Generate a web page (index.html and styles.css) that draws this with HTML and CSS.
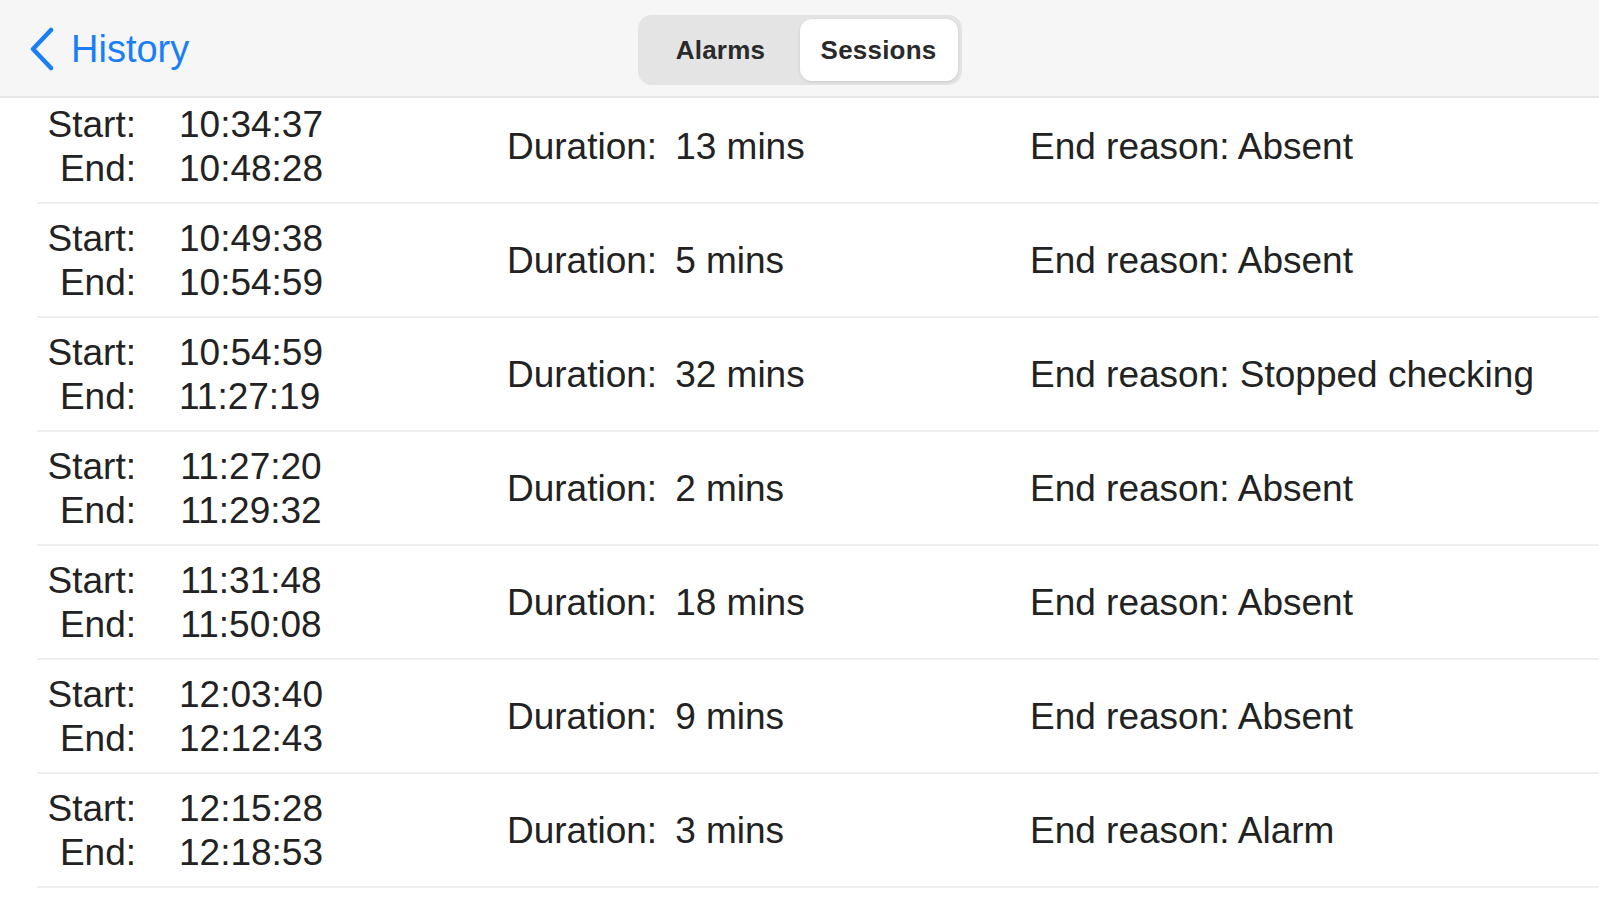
FILE: index.html
```html
<!DOCTYPE html>
<html>
<head>
<meta charset="utf-8">
<link rel="stylesheet" href="styles.css">
</head>
<body>
<header class="navbar">
  <a class="back">
    <svg class="chevron" width="28" height="44" viewBox="0 0 28 44"><path d="M23 3 L5 22 L23 41" fill="none" stroke="#1a7ff6" stroke-width="4.5" stroke-linecap="round" stroke-linejoin="round"/></svg>
    <span>History</span>
  </a>
  <div class="segmented">
    <div class="seg">Alarms</div>
    <div class="seg selected">Sessions</div>
  </div>
</header>
<main class="list">
  <div class="row">
    <div class="labels"><div>Start:</div><div>End:</div></div>
    <div class="times"><div class="stack"><div>10:34:37</div><div>10:48:28</div></div></div>
    <div class="duration"><span>Duration:</span><span>13 mins</span></div>
    <div class="reason">End reason: Absent</div>
  </div>
  <div class="row">
    <div class="labels"><div>Start:</div><div>End:</div></div>
    <div class="times"><div class="stack"><div>10:49:38</div><div>10:54:59</div></div></div>
    <div class="duration"><span>Duration:</span><span>5 mins</span></div>
    <div class="reason">End reason: Absent</div>
  </div>
  <div class="row">
    <div class="labels"><div>Start:</div><div>End:</div></div>
    <div class="times"><div class="stack"><div>10:54:59</div><div>11:27:19</div></div></div>
    <div class="duration"><span>Duration:</span><span>32 mins</span></div>
    <div class="reason">End reason: Stopped checking</div>
  </div>
  <div class="row">
    <div class="labels"><div>Start:</div><div>End:</div></div>
    <div class="times"><div class="stack"><div>11:27:20</div><div>11:29:32</div></div></div>
    <div class="duration"><span>Duration:</span><span>2 mins</span></div>
    <div class="reason">End reason: Absent</div>
  </div>
  <div class="row">
    <div class="labels"><div>Start:</div><div>End:</div></div>
    <div class="times"><div class="stack"><div>11:31:48</div><div>11:50:08</div></div></div>
    <div class="duration"><span>Duration:</span><span>18 mins</span></div>
    <div class="reason">End reason: Absent</div>
  </div>
  <div class="row">
    <div class="labels"><div>Start:</div><div>End:</div></div>
    <div class="times"><div class="stack"><div>12:03:40</div><div>12:12:43</div></div></div>
    <div class="duration"><span>Duration:</span><span>9 mins</span></div>
    <div class="reason">End reason: Absent</div>
  </div>
  <div class="row">
    <div class="labels"><div>Start:</div><div>End:</div></div>
    <div class="times"><div class="stack"><div>12:15:28</div><div>12:18:53</div></div></div>
    <div class="duration"><span>Duration:</span><span>3 mins</span></div>
    <div class="reason">End reason: Alarm</div>
  </div>
</main>
</body>
</html>
```

FILE: styles.css
```css
html, body {
  margin: 0;
  padding: 0;
  background: #ffffff;
  font-family: "Liberation Sans", Arial, sans-serif;
  color: #222222;
  overflow: hidden;
}

.navbar {
  position: relative;
  z-index: 1;
  height: 96px;
  background: #f6f6f6;
  border-bottom: 2px solid #e6e6e6;
  display: flex;
  align-items: center;
  justify-content: center;
}

.back {
  position: absolute;
  left: 28px;
  top: 27px;
  display: flex;
  align-items: center;
  gap: 15px;
  color: #1a7ff6;
  font-size: 38px;
  line-height: 44px;
}

.chevron {
  display: block;
}

.segmented {
  margin-top: 4px;
  width: 316px;
  height: 62px;
  padding: 4px;
  background: #e4e4e4;
  border-radius: 14px;
  display: flex;
}

.seg {
  flex: 1;
  display: flex;
  align-items: center;
  justify-content: center;
  font-size: 26px;
  font-weight: 700;
  letter-spacing: 0.2px;
  color: #2a2a2a;
  border-radius: 12px;
}

.seg.selected {
  background: #ffffff;
  box-shadow: 0 1px 3px rgba(0, 0, 0, 0.12);
}

.list {
  margin-top: -8px;
}

.row {
  height: 111px;
  padding-top: 1px;
  margin-left: 37px;
  border-bottom: 2px solid #efefef;
  display: flex;
  align-items: center;
  font-size: 37px;
  line-height: 44px;
  color: #222222;
}

.row > div {
  flex: none;
}

.labels {
  width: 99px;
  text-align: right;
}

.times {
  width: 230px;
  display: flex;
  justify-content: center;
}

.stack {
  text-align: left;
}

.duration {
  width: 523px;
  margin-left: 141px;
  display: flex;
  gap: 18px;
}

.reason {
  white-space: nowrap;
}
```
